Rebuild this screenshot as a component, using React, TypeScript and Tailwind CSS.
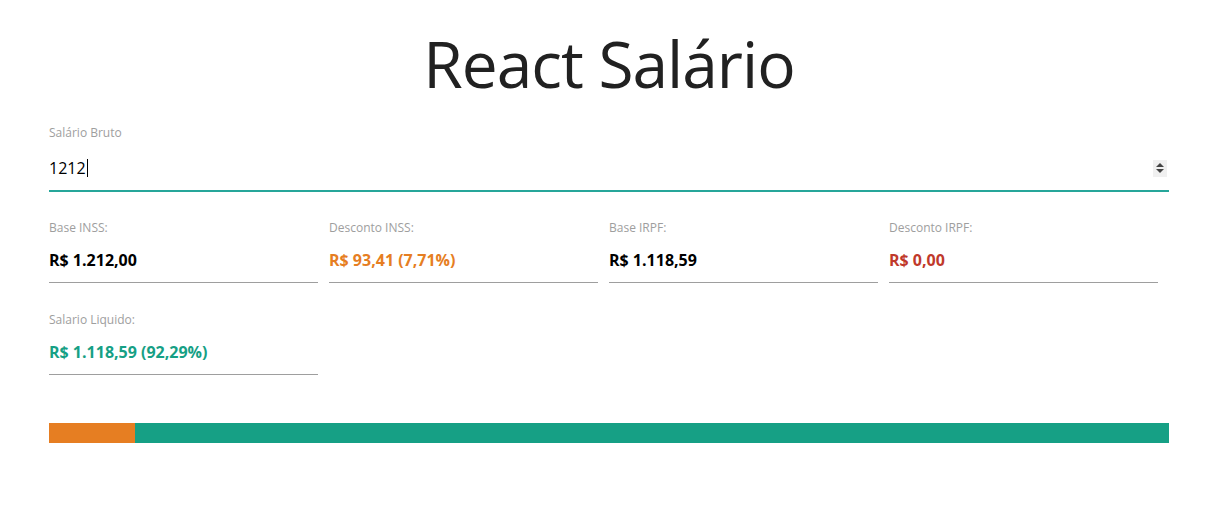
const fontStack = { fontFamily: '"Open Sans", "Noto Sans", sans-serif' };

type Item = { label: string; value: string; color: string };

const items: Item[] = [
  { label: 'Base INSS:', value: 'R$ 1.212,00', color: 'text-black' },
  { label: 'Desconto INSS:', value: 'R$ 93,41 (7,71%)', color: 'text-[#e67e22]' },
  { label: 'Base IRPF:', value: 'R$ 1.118,59', color: 'text-black' },
  { label: 'Desconto IRPF:', value: 'R$ 0,00', color: 'text-[#c0392b]' },
  { label: 'Salario Liquido:', value: 'R$ 1.118,59 (92,29%)', color: 'text-[#16a085]' },
];

const ReadOnlyField = ({ label, value, color }: Item) => {
  return (
    <div className="pr-[11px]">
      <div className="text-[12px] leading-[16px] text-[#9e9e9e]">{label}</div>
      <div className={`mt-[13px] text-[16px] font-bold leading-[22px] ${color}`}>{value}</div>
      <div className="mt-[11px] border-b border-[#9e9e9e]" />
    </div>
  );
};

const App = () => {
  const inss = 7.71;
  return (
    <div className="min-h-[509px] bg-white text-[#212121]" style={fontStack}>
      <div className="ml-[49px] w-[1120px]">
        <h1 className="pt-[24px] text-center text-[64px] font-normal leading-[80px] tracking-[-1px] text-[#212121]">
          React Salário
        </h1>

        <div className="mt-[21px]">
          <label className="block text-[12px] leading-[16px] text-[#9e9e9e]">Salário Bruto</label>
          <div className="mt-[15px] flex h-[24px] items-center justify-between">
            <div className="flex items-center text-[16px] text-black">
              1212
              <span className="ml-[1px] inline-block h-[18px] w-px bg-black" />
            </div>
            <div className="mr-[2px] flex h-[17px] w-[14px] flex-col items-center justify-center gap-[2px] bg-[#f0f0f0]">
              <span className="h-0 w-0 border-x-[4px] border-b-[4px] border-x-transparent border-b-[#444]" />
              <span className="h-0 w-0 border-x-[4px] border-t-[4px] border-x-transparent border-t-[#444]" />
            </div>
          </div>
          <div className="mt-[10px] h-[2px] bg-[#26a69a]" />
        </div>

        <div className="mt-[28px] grid grid-cols-4 gap-y-[29px]">
          {items.map((item) => (
            <ReadOnlyField key={item.label} {...item} />
          ))}
        </div>

        <div className="mt-[48px] flex h-[20px] w-full">
          <div className="h-full bg-[#e67e22]" style={{ width: `${inss}%` }} />
          <div className="h-full flex-1 bg-[#16a085]" />
        </div>
      </div>
    </div>
  );
};

export default App;
